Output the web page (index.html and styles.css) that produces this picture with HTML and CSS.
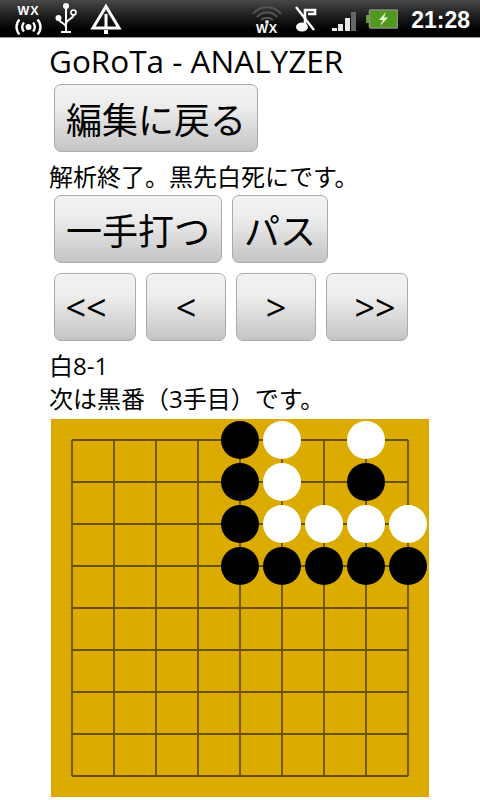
FILE: index.html
```html
<html>
	<head>
		<title>GoRoTa - ANALYZER</title>
		<meta name="viewport" content="width=device-width, initial-scale=1">
		<link rel="stylesheet" href="styles.css">
	</head>
	<body>

		<div class="statusBar">
			<div class="statusLeft">
				<svg class="wxIcon" width="30" height="31" viewBox="0 0 30 31">
					<text x="14.500" y="10" class="wxText">WX</text>
					<circle cx="14.500" cy="22" r="3" fill="#fff"/>
					<path d="M10 17.500a6.500 6.500 0 0 0 0 9M19 17.500a6.500 6.500 0 0 1 0 9M5.500 14.500a11 11 0 0 0 0 15M23.500 14.500a11 11 0 0 1 0 15" fill="none" stroke="#fff" stroke-width="2.400"/>
				</svg>
				<svg class="usbIcon" width="24" height="32" viewBox="0 0 24 32">
					<circle cx="12" cy="4" r="3" fill="#fff"/>
					<path d="M12 4V29M7 30H17M5 17C5 21 12 21 12 25M20 12C20 17 12 17 12 22" fill="none" stroke="#fff" stroke-width="2"/>
					<circle cx="4.500" cy="16" r="3" fill="#fff"/>
					<circle cx="19.500" cy="10.500" r="2.500" fill="none" stroke="#fff" stroke-width="1.600"/>
				</svg>
				<svg class="warnIcon" width="34" height="32" viewBox="0 0 34 32">
					<path d="M17 4.500L30 26H4Z" fill="none" stroke="#fff" stroke-width="3" stroke-linejoin="miter"/>
					<path d="M15.500 12H18.500V26H15.500Z" fill="#fff"/>
					<path d="M15 28H19V32H15Z" fill="#fff"/>
				</svg>
			</div>
			<div class="statusRight">
				<svg class="wifiIcon" width="32" height="34" viewBox="0 0 32 34">
					<path d="M2 10C9 1 23 1 30 10M6 13C11 7 21 7 26 13M10 16C13 13 19 13 22 16" fill="none" stroke="#555" stroke-width="2"/>
					<circle cx="16" cy="18" r="2" fill="#ddd"/>
					<text x="16" y="29" class="wxText">WX</text>
				</svg>
				<svg class="muteIcon" width="22" height="26" viewBox="0 0 22 26">
					<ellipse cx="7" cy="21" rx="6" ry="4.500" fill="#fff"/>
					<path d="M10 20V4H20V8H13" fill="none" stroke="#fff" stroke-width="2.600"/>
					<path d="M1 1L19 24" stroke="#fff" stroke-width="2.400"/>
				</svg>
				<div class="signal">
					<div class="signalBar bar1"></div>
					<div class="signalBar bar2"></div>
					<div class="signalBar bar3"></div>
					<div class="signalBar bar4"></div>
				</div>
				<svg class="batteryIcon" width="32" height="20" viewBox="0 0 32 20">
					<path d="M0 6H4V14H0Z" fill="#5f9a35"/>
					<rect x="3.500" y="1" width="28" height="18" rx="1" fill="#4f9a1e" stroke="#8a8f80" stroke-width="1.600"/>
					<path d="M20 3L13 11H17L14 17L22 8.500H18Z" fill="#e8ffd0"/>
				</svg>
				<div class="clock">21:28</div>
			</div>
		</div>

		<div class="content">
			<div class="title">GoRoTa - ANALYZER</div>

			<div class="buttonRow">
				<div class="btn btnBig backBtn">編集に戻る</div>
			</div>

			<div class="message">解析終了。黒先白死にです。</div>

			<div class="buttonRow">
				<div class="btn btnBig moveBtn">一手打つ</div>
				<div class="btn btnBig passBtn">パス</div>
			</div>

			<div class="buttonRow navRow">
				<div class="btn navBtn nav82 navStart">&lt;&lt;</div>
				<div class="btn navBtn nav80">&lt;</div>
				<div class="btn navBtn nav80">&gt;</div>
				<div class="btn navBtn nav82 navEnd">&gt;&gt;</div>
			</div>

			<div class="info">
				<div class="infoLine">白8-1</div>
				<div class="infoLine">次は黒番（3手目）です。</div>
			</div>

			<svg class="board" width="378" height="378" viewBox="0 0 378 378">
				<rect width="378" height="378" fill="#dbab00"/>
				<path class="grid" d="M21 21H357M21 63H357M21 105H357M21 147H357M21 189H357M21 231H357M21 273H357M21 315H357M21 357H357M21 21V357M63 21V357M105 21V357M147 21V357M189 21V357M231 21V357M273 21V357M315 21V357M357 21V357"/>
				<g fill="#000">
					<circle cx="189" cy="21" r="19"/>
					<circle cx="189" cy="63" r="19"/>
					<circle cx="189" cy="105" r="19"/>
					<circle cx="189" cy="147" r="19"/>
					<circle cx="231" cy="147" r="19"/>
					<circle cx="273" cy="147" r="19"/>
					<circle cx="315" cy="147" r="19"/>
					<circle cx="357" cy="147" r="19"/>
					<circle cx="315" cy="63" r="19"/>
				</g>
				<g fill="#fff">
					<circle cx="231" cy="21" r="19"/>
					<circle cx="315" cy="21" r="19"/>
					<circle cx="231" cy="63" r="19"/>
					<circle cx="231" cy="105" r="19"/>
					<circle cx="273" cy="105" r="19"/>
					<circle cx="315" cy="105" r="19"/>
					<circle cx="357" cy="105" r="19"/>
				</g>
			</svg>
		</div>

	</body>
</html>
```

FILE: styles.css
```css
body
{
	margin: 0;
	background-color: white;
	color: #000;
	font-family: "Open Sans", "Noto Sans CJK JP", sans-serif;
}

.statusBar
{
	display: flex;
	justify-content: space-between;
	height: 38px;
	background: linear-gradient(#484848, #1c1c1c 45%, #000 80%);
	border-bottom: 1px solid #999;
	box-sizing: border-box;
}

.statusLeft
{
	display: flex;
	align-items: flex-start;
	padding-left: 14px;
}

.statusRight
{
	display: flex;
	align-items: flex-start;
	padding-right: 10px;
}

.wxIcon { margin-top: 5px; }
.usbIcon { margin-left: 10px; margin-top: 2px; }
.warnIcon { margin-left: 11px; margin-top: 2px; }
.wifiIcon { margin-top: 4px; }
.muteIcon { margin-left: 12px; margin-top: 6px; }
.batteryIcon { margin-left: 10px; margin-top: 9px; }

.wxText
{
	fill: white;
	font-family: "Liberation Sans", sans-serif;
	font-size: 12.500px;
	font-weight: bold;
	text-anchor: middle;
	letter-spacing: 1px;
}

.signal
{
	display: flex;
	align-items: flex-end;
	gap: 1.500px;
	height: 19px;
	margin-left: 15px;
	margin-top: 12px;
}

.signalBar
{
	width: 5px;
	background-color: #e8e8e8;
}

.bar1 { height: 3px; }
.bar2 { height: 7px; }
.bar3 { height: 13px; }
.bar4 { height: 19px; background-color: #666; }

.clock
{
	margin-left: 13px;
	margin-top: 5px;
	color: white;
	font-family: "Liberation Sans", sans-serif;
	font-size: 23px;
	font-weight: bold;
	line-height: 30px;
}

.content
{
	padding-left: 50px;
}

.title
{
	height: 46px;
	font-size: 31.500px;
	line-height: 46px;
	margin-left: -1px;
}

.buttonRow
{
	display: flex;
	gap: 10px;
	padding-left: 4px;
}

.navRow
{
	margin-top: 10px;
}

.btn
{
	display: flex;
	align-items: center;
	justify-content: center;
	height: 68px;
	box-sizing: border-box;
	border: 1px solid #aaa;
	border-radius: 7px;
	background: linear-gradient(#f3f3f3, #ececec 35%, #c4c4c4);
	color: #000;
}

.btnBig
{
	font-size: 36px;
}

.backBtn { width: 204px; }
.moveBtn { width: 168px; }
.passBtn { width: 96px; }

.navBtn
{
	font-size: 36px;
}

.nav82 { width: 82px; }
.nav80 { width: 80px; }
.navStart { padding-right: 18px; }
.navEnd { padding-left: 16px; }

.message
{
	height: 43px;
	font-size: 24px;
	line-height: 50px;
	white-space: nowrap;
	margin-left: -1px;
}

.info
{
	padding-top: 8px;
	font-size: 24px;
	line-height: 33px;
	margin-left: -1px;
}

.infoLine
{
	height: 33px;
	white-space: nowrap;
}

.board
{
	display: block;
	margin-left: 1px;
	margin-top: 4px;
}

.grid
{
	fill: none;
	stroke: #6b5000;
	stroke-width: 1.800;
}
```
